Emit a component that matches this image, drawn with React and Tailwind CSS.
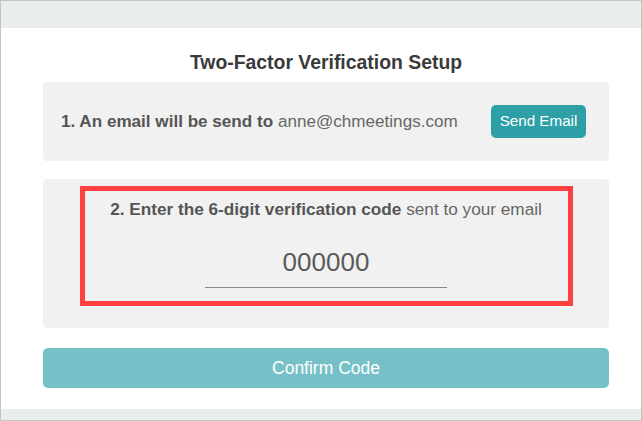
export default function App() {
  return (
    <div
      className="w-[642px] h-[421px] border border-[#c3c3c3] flex flex-col bg-white"
      style={{ fontFamily: '"Liberation Sans", Arial, sans-serif' }}
    >
      <div className="h-[27px] bg-[#eaeded] shrink-0" />
      <div className="flex-1 bg-white pl-[42px] flex flex-col">
        <div className="w-[566px] flex flex-col">
          <h1 className="text-center text-[19.4px] font-bold text-[#3a3a3a] mt-[22px] leading-[24px]">
            Two-Factor Verification Setup
          </h1>
          <div className="mt-[8px] h-[79px] bg-[#f1f1f1] rounded-[4px] flex items-center justify-between pl-[18px] pr-[23px]">
            <p className="text-[17.1px] text-[#666]">
              <span className="font-bold text-[#555]">1. An email will be send to</span> anne@chmeetings.com
            </p>
            <button className="h-[33px] w-[95px] bg-[#2c9fa7] text-white text-[15.2px] rounded-[5px]">
              Send Email
            </button>
          </div>
          <div className="mt-[18px] h-[149px] bg-[#f1f1f1] rounded-[4px] flex flex-col items-center pt-[7px]">
            <div className="w-[493px] h-[120px] border-[5px] border-[#ff4141] flex flex-col items-center">
              <p className="text-[17.2px] text-[#666] mt-[7px] leading-[22px]">
                <span className="font-bold text-[#555]">2. Enter the 6-digit verification code</span> sent to your email
              </p>
              <div className="mt-[27px] w-[242px] border-b border-[#8a8a8a] text-center text-[26px] text-[#5a5a5a] leading-[30px] pb-[10px]">
                000000
              </div>
            </div>
          </div>
          <button className="mt-[20px] h-[40px] bg-[#76c1c7] text-white text-[17.5px] rounded-[5px]">
            Confirm Code
          </button>
        </div>
      </div>
      <div className="h-[11px] bg-[#eaeded] shrink-0" />
    </div>
  );
}
